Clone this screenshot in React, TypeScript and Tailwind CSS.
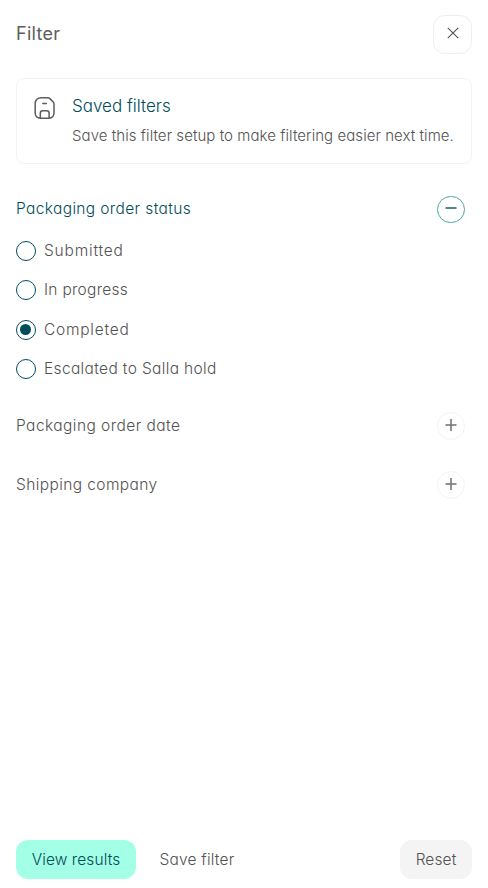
import React, { useState } from "react";

interface SectionHeaderProps {
  title: string;
  open: boolean;
  tracking: string;
  onClick: () => void;
}

const statuses = [
  { label: "Submitted", tracking: "tracking-[0.8px]" },
  { label: "In progress", tracking: "tracking-[0.28px]" },
  { label: "Completed", tracking: "tracking-[0.75px]" },
  { label: "Escalated to Salla hold", tracking: "tracking-[0.35px]" },
];

const SaveIcon = () => (
  <svg className="h-6 w-6" viewBox="0 0 24 24" fill="none" stroke="currentColor" strokeWidth="1.5" strokeLinecap="round" strokeLinejoin="round">
    <path d="M8.5 1.8h6.2c.9 0 1.6.3 2.2.8l3.1 3.1c.6.6 1 1.4 1 2.3v8.8c0 4-1.6 5.4-5.1 5.4H7.6c-3.8 0-5.4-1.9-5.4-5.4V7.7c0-3.9 1.9-5.9 6.3-5.9Z" />
    <path d="M7.3 22v-4.8c0-2 .7-2.4 2.4-2.4h4c1.7 0 2.4.4 2.4 2.4V22" />
    <path d="M9.8 7.4h3.6" />
  </svg>
);

const SectionHeader: React.FC<SectionHeaderProps> = ({ title, open, tracking, onClick }) => {
  return (
    <button onClick={onClick} className="flex h-7 w-full items-center justify-between pr-[7px] text-left">
      <span className={`leading-6 ${tracking} ${open ? "text-[#004d5a]" : "text-[#525252]"}`}>{title}</span>
      <span
        className={`flex w-7 items-center justify-center rounded-full border ${
          open ? "mt-px h-[27px] border-[#4da5a9] text-[#4f858d]" : "h-7 border-[#f4f4f4] text-[#777777]"
        }`}
      >
        <svg className="mb-[3px] h-3 w-3" viewBox="0 0 12 12" fill="none" stroke="currentColor">
          <path d="M.5 6h11" strokeWidth={open ? 2 : 1.6} />
          {!open && <path d="M6 0v12" strokeWidth="1.6" />}
        </svg>
      </span>
    </button>
  );
};

const App = () => {
  const [selected, setSelected] = useState("Completed");
  const [openSection, setOpenSection] = useState("status");

  const toggle = (name: string) => setOpenSection(openSection === name ? "" : name);

  return (
    <div className="flex min-h-screen flex-col bg-white px-4 pb-[9px] pt-[15px] font-['Inter','Lato',sans-serif] text-[15.5px] font-light text-[#525252] [font-feature-settings:'cv11']">
      {/* Header */}
      <div className="flex items-center justify-between">
        <h2 className="mb-0.5 text-lg font-normal leading-6 tracking-[0.3px] text-[#5c5c5c]">Filter</h2>
        <button aria-label="Close" className="flex h-[39px] w-[39px] items-center justify-center rounded-xl border border-[#eeeeee]">
          <svg className="mb-[3px] h-3 w-3" viewBox="0 0 12 12" fill="none" stroke="currentColor" strokeWidth="1.1">
            <path d="m.8.8 10.4 10.4M11.2.8.8 11.2" />
          </svg>
        </button>
      </div>

      {/* Saved filters */}
      <div className="mt-6 flex h-[86px] gap-[15px] rounded-lg border border-[#f3f3f3] pl-4 pt-[14px]">
        <div className="mt-[3px] text-[#5c5c5c]">
          <SaveIcon />
        </div>
        <div>
          <h3 className="mt-px text-[17px] leading-6 text-[#004d5a]">Saved filters</h3>
          <p className="mt-1.5 whitespace-nowrap text-[15px] leading-6 tracking-[0.06px]">Save this filter setup to make filtering easier next time.</p>
        </div>
      </div>

      {/* Sections */}
      <div className="mt-[31px]">
        <SectionHeader title="Packaging order status" tracking="tracking-[0.37px]" open={openSection === "status"} onClick={() => toggle("status")} />
        {openSection === "status" && (
          <div className="mt-[18px] mb-[33px] flex flex-col gap-[19.4px]">
            {statuses.map((status) => (
              <label key={status.label} className="flex h-5 cursor-pointer items-center gap-2">
                <input type="radio" name="status" className="sr-only" checked={selected === status.label} onChange={() => setSelected(status.label)} />
                <span className="flex h-5 w-5 items-center justify-center rounded-full border border-[#004d5a]">
                  {selected === status.label && <span className="mr-px h-[11px] w-[11px] rounded-full bg-[#004d5a]"></span>}
                </span>
                <span className={`leading-5 ${status.tracking}`}>{status.label}</span>
              </label>
            ))}
          </div>
        )}
      </div>
      <SectionHeader title="Packaging order date" tracking="tracking-[0.45px]" open={openSection === "date"} onClick={() => toggle("date")} />
      <div className="mt-[31px]">
        <SectionHeader title="Shipping company" tracking="tracking-[0.4px]" open={openSection === "company"} onClick={() => toggle("company")} />
      </div>

      {/* Footer */}
      <div className="mt-auto flex h-[39px] items-stretch">
        <button className="w-[120px] rounded-xl bg-[#a3ffe5] tracking-[0.1px] text-[#004d5a]">View results</button>
        <button className="ml-2 w-[106px] tracking-[0.2px]">Save filter</button>
        <button className="ml-auto w-[72px] rounded-xl bg-[#f4f4f4] tracking-[0.1px]">Reset</button>
      </div>
    </div>
  );
};

export default App;
